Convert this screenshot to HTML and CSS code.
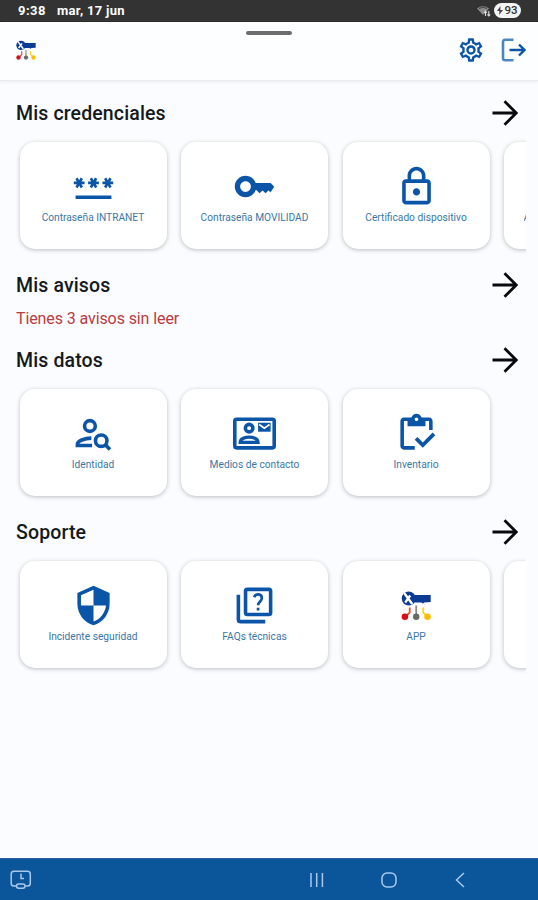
FILE: index.html
```html
<!DOCTYPE html>
<html lang="es">
<head>
<meta charset="utf-8">
<title>Portal</title>
<link rel="stylesheet" href="styles.css">
</head>
<body>
<svg class="defs" width="0" height="0">
  <symbol id="arrow" viewBox="0 0 26 26"><path d="M.5 13h24M12.500 1.200L24.300 13L12.500 24.800" fill="none" stroke="#080a0c" stroke-width="2.800"/></symbol>
  <symbol id="logo" viewBox="0 0 30 30">
    <path d="M11 4.500H29.500V11.500L23 12L22 13L20 12H11z" fill="#0b3b94"/>
    <circle cx="7.500" cy="8" r="7" fill="#0b3b94"/>
    <path d="M3 2.500L11 13.500M9 5L4 12" stroke="#fff" stroke-width="2.300"/>
    <path d="M8.500 17v5l-4 4" fill="none" stroke="#e2542d" stroke-width="1.800"/><circle cx="3.700" cy="26.300" r="3.300" fill="#d80f16"/>
    <path d="M15 15v11" stroke="#8b8b8b" stroke-width="1.800"/><circle cx="15" cy="26.300" r="3.200" fill="#69696c"/>
    <path d="M22 17v5l4 4" fill="none" stroke="#fbd51c" stroke-width="1.800"/><circle cx="26.300" cy="26.300" r="3.300" fill="#fbbd08"/>
  </symbol>
</svg>
<div class="status">
  <span class="time">9:38</span><span class="date">mar, 17 jun</span>
  <svg class="wifi" width="14" height="12" viewBox="0 0 14 12"><path d="M0 3.500Q6 -1 12 3.500L6 10z" fill="#8b8b8b"/><path d="M2 3.500Q6 1 10 3.500" fill="none" stroke="#444" stroke-width="1"/><path d="M8.500 11V6.500M7 8l1.500-1.800L10 8M11.800 6v4.800M10.400 9.300l1.400 1.700 1.400-1.700" fill="none" stroke="#ddd" stroke-width="1.100"/></svg>
  <span class="battery"><svg width="6" height="9" viewBox="0 0 6 9"><path d="M3.500 0L0 5h2.500L2 9l4-5H3.300z" fill="#444"/></svg>93</span>
</div>
<header class="header">
  <svg class="brand" width="20" height="20"><use href="#logo"/></svg>
  <span class="handle"></span>
  <svg class="gear" width="28" height="28" viewBox="0 0 24 24"><path fill="#0b55a8" d="M19.430 12.980c.04-.32.07-.64.07-.98s-.03-.66-.07-.98l2.110-1.650c.19-.15.24-.42.12-.64l-2-3.460c-.09-.16-.26-.25-.44-.25-.06 0-.12.010-.17.030l-2.490 1c-.52-.4-1.080-.73-1.690-.98l-.38-2.650C14.460 2.180 14.250 2 14 2h-4c-.25 0-.46.18-.49.42l-.38 2.650c-.61.25-1.170.59-1.690.98l-2.490-1c-.06-.02-.12-.03-.18-.03-.17 0-.34.09-.43.25l-2 3.460c-.13.22-.07.49.12.64l2.110 1.650c-.04.32-.07.65-.07.98s.03.66.07.98l-2.110 1.650c-.19.15-.24.42-.12.64l2 3.460c.09.16.26.25.44.25.06 0 .12-.01.17-.03l2.490-1c.52.4 1.080.73 1.690.98l.38 2.650c.03.24.24.42.49.42h4c.25 0 .46-.18.49-.42l.38-2.650c.61-.25 1.170-.59 1.690-.98l2.490 1c.06.02.12.03.18.03.17 0 .34-.09.43-.25l2-3.460c.12-.22.07-.49-.12-.64l-2.110-1.650zm-1.980-1.710c.04.31.05.52.05.73 0 .21-.02.43-.05.73l-.14 1.130.89.7 1.080.84-.7 1.210-1.270-.51-1.040-.42-.9.68c-.43.32-.84.56-1.250.73l-1.060.43-.16 1.130-.2 1.350h-1.400l-.19-1.350-.16-1.130-1.060-.43c-.43-.18-.83-.41-1.230-.71l-.91-.7-1.060.43-1.270.51-.7-1.210 1.080-.84.89-.7-.14-1.130c-.03-.31-.05-.54-.05-.74s.02-.43.05-.73l.14-1.130-.89-.7-1.080-.84.7-1.210 1.270.51 1.040.42.9-.68c.43-.32.84-.56 1.250-.73l1.060-.43.16-1.130.2-1.350h1.390l.19 1.350.16 1.130 1.060.43c.43.18.83.41 1.230.71l.91.7 1.060-.43 1.270-.51.7 1.210-1.070.85-.89.7.14 1.130zM12 8c-2.210 0-4 1.790-4 4s1.790 4 4 4 4-1.790 4-4-1.790-4-4-4zm0 6c-1.100 0-2-.9-2-2s.9-2 2-2 2 .9 2 2-.9 2-2 2z"/></svg>
  <svg class="logout" width="25" height="24" viewBox="0 0 25 24"><path d="M12.500 1.700H4.200Q2 1.700 2 4V20Q2 22.300 4.200 22.300H12.500" fill="none" stroke="#4a86c4" stroke-width="2.600"/><path d="M8.500 12H23M18 6.500L23.500 12L18 17.500" fill="none" stroke="#0b55a8" stroke-width="2.400"/></svg>
</header>
<main>
  <section class="block">
    <div class="head"><h2>Mis credenciales</h2><svg class="arrow"><use href="#arrow"/></svg></div>
    <div class="cards">
      <div class="card"><svg class="icon" viewBox="0 0 24 24"><path d="M2 17h20v2H2v-2zm1.150-4.050L4 11.470l.85 1.480 1.300-.75-.85-1.480H7v-1.500H5.300l.85-1.470L4.850 7 4 8.470 3.150 7l-1.300.75.85 1.470H1v1.500h1.700l-.85 1.480 1.300.75zm6.700-.75l1.300.75.85-1.480.85 1.480 1.300-.75-.85-1.480H15v-1.500h-1.700l.85-1.470-1.300-.75L12 8.470 11.150 7l-1.300.75.85 1.470H9v1.500h1.700l-.85 1.480zM23 9.220h-1.700l.85-1.470-1.300-.75L20 8.470 19.150 7l-1.300.75.85 1.470H17v1.500h1.700l-.85 1.480 1.300.75.85-1.480.85 1.480 1.300-.75-.85-1.480H23v-1.500z"/></svg><span>Contraseña INTRANET</span></div>
      <div class="card"><svg class="icon" viewBox="0 0 24 24"><path d="M21 10h-8.350C11.830 7.670 9.610 6 7 6c-3.310 0-6 2.690-6 6s2.690 6 6 6c2.610 0 4.830-1.670 5.650-4H13l1.800 1.800 1.700-1.600 1.700 1.600 1.600-1.600 1.200 1L23 12.200 21 10zM7 15c-1.650 0-3-1.350-3-3s1.350-3 3-3 3 1.350 3 3-1.350 3-3 3z"/></svg><span>Contraseña MOVILIDAD</span></div>
      <div class="card"><svg class="icon" viewBox="0 0 24 24"><path d="M18 8h-1V6c0-2.760-2.240-5-5-5S7 3.240 7 6v2H6c-1.100 0-2 .9-2 2v10c0 1.100.9 2 2 2h12c1.100 0 2-.9 2-2V10c0-1.100-.9-2-2-2zM9 6c0-1.660 1.340-3 3-3s3 1.340 3 3v2H9V6zm9 14H6V10h12v10zm-6-3c1.100 0 2-.9 2-2s-.9-2-2-2-2 .9-2 2 .9 2 2 2z"/></svg><span>Certificado dispositivo</span></div>
      <div class="card partial"><span>A</span></div>
    </div>
  </section>
  <section class="block notices">
    <div class="head"><h2>Mis avisos</h2><svg class="arrow"><use href="#arrow"/></svg></div>
    <p>Tienes 3 avisos sin leer</p>
  </section>
  <section class="block">
    <div class="head"><h2>Mis datos</h2><svg class="arrow"><use href="#arrow"/></svg></div>
    <div class="cards">
      <div class="card"><svg class="icon line" viewBox="0 0 24 24"><circle cx="10" cy="7.800" r="3"/><path d="M10.800 14.600C7 14.600 3 16.200 3 18V18.700H11.200"/><circle cx="16.300" cy="16" r="3.200"/><path d="M18.500 18.200L21.200 20.900"/></svg><span>Identidad</span></div>
      <div class="card"><svg class="icon line" viewBox="0 0 24 24"><rect x="1" y="4" width="22" height="16" rx="1"/><circle cx="9" cy="9" r="2.100"/><path d="M4 17C4 14.800 7 14 9 14S14 14.800 14 17z" stroke-width="1.800"/><path d="M14 6h7v5h-7z" fill="#0b55a8" stroke="none"/><path d="M14.600 7L17.500 9L20.400 7" stroke="#fff" stroke-width="1"/></svg><span>Medios de contacto</span></div>
      <div class="card"><svg class="icon" viewBox="0 0 24 24"><path d="M5 5h2v3h10V5h2v5h2V5c0-1.100-.9-2-2-2h-4.180C14.400 1.840 13.300 1 12 1s-2.400.84-2.820 2H5c-1.100 0-2 .9-2 2v14c0 1.100.9 2 2 2h6v-2H5V5zm7-2c.55 0 1 .45 1 1s-.45 1-1 1-1-.45-1-1 .45-1 1-1zM21 11.500L15.510 17l-3.010-3L11 15.500l4.510 4.500L22.500 13z"/></svg><span>Inventario</span></div>
    </div>
  </section>
  <section class="block">
    <div class="head"><h2>Soporte</h2><svg class="arrow"><use href="#arrow"/></svg></div>
    <div class="cards">
      <div class="card"><svg class="icon" viewBox="0 0 24 24"><path d="M12 1L3 5v6c0 5.550 3.840 10.740 9 12 5.160-1.260 9-6.450 9-12V5l-9-4zm0 10.990h7c-.53 4.120-3.280 7.790-7 8.940V12H5V6.300l7-3.110v8.800z"/></svg><span>Incidente seguridad</span></div>
      <div class="card"><svg class="icon line" viewBox="0 0 24 24"><rect x="7" y="3" width="14" height="14" rx="1"/><path d="M3 6V20Q3 21 4 21H18"/><path d="M11.800 7.400C12.600 5 16.100 5.300 16.100 7.900C16.100 9.700 14 9.800 14 11.900M14 13.200V14.800" stroke-width="1.500"/></svg><span>FAQs técnicas</span></div>
      <div class="card"><svg class="icon" viewBox="0 0 43 43"><use href="#logo" x="6.200" y="6.500" width="30" height="30"/></svg><span>APP</span></div>
      <div class="card"></div>
    </div>
  </section>
</main>
<nav class="nav">
  <svg width="22" height="20" viewBox="0 0 22 20"><path d="M6 16H4Q1.200 16 1.200 13.200V4Q1.200 1.200 4 1.200H17.500Q20.300 1.200 20.300 4V13.200Q20.300 16 17.500 16H15.500M11 3.500V8.500H14"/><rect x="6.500" y="14" width="8.500" height="4.200" rx="2.100"/></svg>
  <svg class="recent" width="16" height="16" viewBox="0 0 16 16"><path d="M2 1V15M7.700 1V15M13.400 1V15"/></svg>
  <svg class="home" width="16" height="16" viewBox="0 0 16 16"><rect x="1" y="1" width="14" height="14" rx="5"/></svg>
  <svg class="back" width="10" height="16" viewBox="0 0 10 16"><path d="M9 1L1.500 8L9 15"/></svg>
</nav>
</body>
</html>
```
FILE: styles.css
```css
* { box-sizing: border-box; }
body { margin: 0; width: 538px; height: 900px; display: flex; flex-direction: column; overflow: hidden; background: #fbfcff; font-family: Roboto, "Liberation Sans", sans-serif; }
.defs { position: absolute; }
.status { height: 22px; flex: none; background: #333; border-bottom: 1px solid #151515; color: #fff; display: flex; align-items: center; padding: 0 17px 0 18px; font-size: 13px; font-weight: 700; white-space: nowrap; }
.time { width: 39px; letter-spacing: .5px; }
.date { letter-spacing: .3px; }
.wifi { margin-left: auto; margin-right: 3px; }
.battery { width: 27px; height: 15px; border-radius: 8px; background: #f4f4f4; color: #333; font-size: 11.5px; font-weight: 500; display: flex; align-items: center; justify-content: center; gap: 1px; margin-bottom: 1px; }
.header { position: relative; height: 59px; flex: none; display: flex; align-items: center; padding: 0 12.500px 2px 16px; background: #fdfeff; border-bottom: 1px solid #e9ebee; box-shadow: 0 1px 3px #dfe2e799; }
.handle { position: absolute; left: 246px; top: 8.500px; width: 46px; height: 4px; border-radius: 2px; background: #6d6d70; }
.gear { margin-left: auto; margin-right: 16px; }
main { flex: 1; min-height: 0; padding: 10.500px 12px 0 16px; }
.block { height: 172px; }
.notices { height: 75px; }
.head { height: 42px; display: flex; align-items: center; justify-content: space-between; padding-right: 8px; }
h2 { margin: 1px 0 0; font-size: 19.5px; font-weight: 500; color: #14191d; letter-spacing: .13px; white-space: nowrap; }
.arrow { width: 26px; height: 26px; }
.notices p { margin: 4px 0 0; font-size: 16px; line-height: 18px; letter-spacing: -.1px; color: #b93b40; white-space: nowrap; }
.cards { display: flex; gap: 14.500px; height: 126px; padding: 8.500px 0 0 8px; margin-left: -4.500px; overflow: hidden; }
.card { flex: none; width: 147px; height: 107px; border-radius: 15px; background: #fff; box-shadow: 0 1px 4px rgba(40, 44, 52, .3); display: flex; flex-direction: column; align-items: center; padding-top: 22.500px; }
.icon { width: 43px; height: 43px; flex: none; fill: #0b55a8; }
.line { fill: none; stroke: #0b55a8; stroke-width: 2; }
.card span { margin-top: 3px; font-size: 10.2px; line-height: 13px; color: #3977a6; white-space: nowrap; }
.partial { width: 40px; border-radius: 15px 0 0 15px; align-items: flex-start; padding: 68.500px 0 0 19.500px; }
.partial span { margin: 0; width: 3px; overflow: hidden; }
.nav { height: 42px; flex: none; background: #0b559b; border-top: 1px solid #2a5f9f; display: flex; align-items: center; padding: 1px 0 0 10px; }
.nav svg { fill: none; stroke: #a9c9ec; stroke-width: 1.500; }
.nav .recent { margin-left: 277px; }
.nav .home { margin-left: 56px; }
.nav .back { margin-left: 58px; }
```
